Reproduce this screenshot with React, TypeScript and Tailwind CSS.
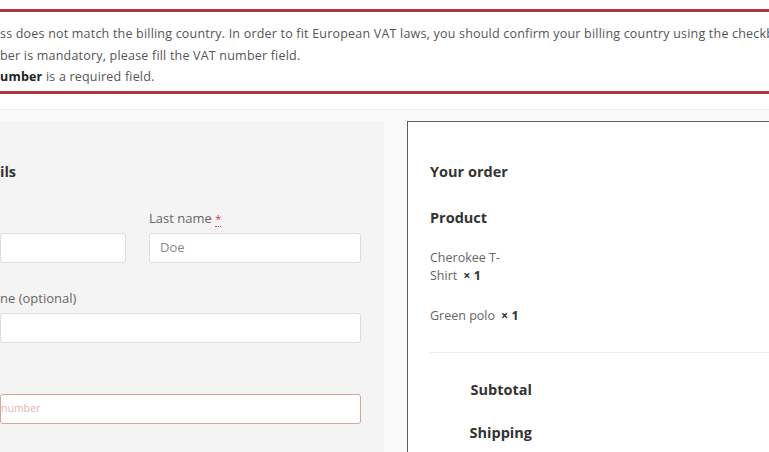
import React from "react";

const font = "font-['Open_Sans',_'Noto_Sans',_sans-serif]";

function Field({ label, placeholder, error, className = "" }: { label?: React.ReactNode; placeholder?: string; error?: boolean; className?: string }) {
  return (
    <div className={className}>
      {label && <div className="h-[18px] text-[13px] leading-[18px] text-[#666] mb-[6px] whitespace-nowrap">{label}</div>}
      <div
        className={`h-[30px] rounded-[3px] bg-white border flex items-center whitespace-nowrap ${
          error ? "border-[#d9a39b]" : "border-[#dcdcdc]"
        }`}
      >
        {placeholder && (
          <span className={error ? "text-[10.5px] text-[#e2b4b0]" : "pl-[10px] text-[13px] text-[#8a8a8a]"}>{placeholder}</span>
        )}
      </div>
    </div>
  );
}

export default function App() {
  return (
    <div className={`w-[769px] h-[452px] overflow-hidden bg-[#fafafa] ${font}`}>
      {/* notices */}
      <div className="bg-white pt-[9px] pb-[15px] border-b border-[#ececec]">
        <ul className="bg-white border-y-[3px] border-[#b3363f] pt-[11px] pb-[3px] text-[12.5px] leading-[21.5px] tracking-[0.2px] text-[#555] whitespace-nowrap overflow-hidden">
          <li>ss does not match the billing country. In order to fit European VAT laws, you should confirm your billing country using the checkbox below.</li>
          <li>ber is mandatory, please fill the VAT number field.</li>
          <li>
            <strong className="font-bold text-[#222]">umber</strong> is a required field.
          </li>
        </ul>
      </div>

      <div className="pt-[11px] flex items-start">
        {/* billing details */}
        <div className="w-[384px] h-[340px] bg-[#f4f4f4] pr-[23px] pt-[41px]">
          <h3 className="h-[20px] text-[14.5px] leading-[20px] font-bold text-[#333]">ils</h3>
          <div className="mt-[27px] flex gap-[23px]">
            <Field className="w-[126px]" label={<span>&nbsp;</span>} />
            <Field
              className="flex-1"
              placeholder="Doe"
              label={
                <span>
                  Last name <abbr className="text-[#e23a3a] no-underline border-b border-dotted border-[#e23a3a] text-[11px]">*</abbr>
                </span>
              }
            />
          </div>
          <Field className="mt-[26px]" label="ne (optional)" />
          <Field className="mt-[51px]" placeholder="number" error />
        </div>

        <div className="w-[23px]" />

        {/* order review */}
        <div className="flex-1 h-[340px] bg-white border border-[#5e5e5e] border-r-0 pl-[22px] pt-[40px]">
          <h3 className="h-[20px] text-[14.5px] leading-[20px] font-bold text-[#333]">Your order</h3>
          <div className="mt-[26px] h-[20px] text-[14.5px] leading-[20px] font-bold text-[#333]">Product</div>
          <div className="mt-[21px] w-[100px] text-[12.5px] leading-[18px] text-[#666]">
            Cherokee T-Shirt<strong className="ml-[6px] text-[#333] font-bold">× 1</strong>
          </div>
          <div className="mt-[22px] text-[12.5px] leading-[18px] text-[#666] whitespace-nowrap">
            Green polo<strong className="ml-[6px] text-[#333] font-bold">× 1</strong>
          </div>
          <div className="mt-[27px] h-px bg-[#ececec]" />
          <div className="w-[102px] text-right mt-[27px] h-[20px] text-[14.5px] leading-[20px] font-bold text-[#333]">Subtotal</div>
          <div className="w-[102px] text-right mt-[23px] h-[20px] text-[14.5px] leading-[20px] font-bold text-[#333]">Shipping</div>
        </div>
      </div>
    </div>
  );
}
